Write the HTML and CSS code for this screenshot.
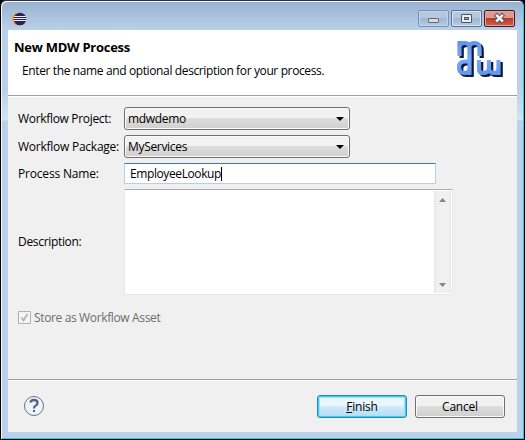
FILE: index.html
```html
<!DOCTYPE html>
<html lang="en">
<head>
<meta charset="utf-8">
<title>New MDW Process</title>
<link rel="stylesheet" href="styles.css">
</head>
<body>
<div class="window">
  <div class="titlebar">
    <svg class="eclipse" width="15" height="14" viewBox="0 0 15 14"><circle cx="6.500" cy="7" r="6.300" fill="#f7941e"/><circle cx="8" cy="7" r="6.300" fill="#2c2255"/><path d="M2 4.500h12M1.500 6.500h13M2 8.500h12" stroke="#e8e8f2" stroke-width="1"/></svg>
    <div class="controls">
      <span class="control"><svg width="28" height="15" viewBox="0 0 28 15"><rect x="9.500" y="7.500" width="10" height="4" rx=".5" fill="#dedbd5" stroke="#626b78"/></svg></span>
      <span class="control max"><svg width="28" height="15" viewBox="0 0 28 15"><rect x="9.500" y="3.500" width="10" height="8" rx=".5" fill="#eee" stroke="#4b5265"/><rect x="12.500" y="6.500" width="4" height="2" fill="#91add6" stroke="#4b5265"/></svg></span>
      <span class="control close"><svg width="28" height="15" viewBox="0 0 28 15"><path d="M12 4.700l5 5M17 4.700l-5 5" stroke="#555566" stroke-width="4.400" stroke-linecap="square"/><path d="M12 4.700l5 5M17 4.700l-5 5" stroke="#f5f3f3" stroke-width="2.500" stroke-linecap="square"/></svg></span>
    </div>
  </div>
  <main class="client">
    <header class="header">
      <div><h1 class="title">New MDW Process</h1>
      <p class="subtitle">Enter the name and optional description for your process.</p></div>
      <svg class="logo" width="52" height="44" viewBox="0 0 52 44" fill="none" stroke-width="4.200">
        <defs>
          <linearGradient id="blue" gradientUnits="userSpaceOnUse" x1="0" y1="4" x2="0" y2="39"><stop stop-color="#5f92ea"/><stop offset=".5" stop-color="#7ba9fb"/><stop offset="1" stop-color="#5f94ee"/></linearGradient>
          <g id="mark"><path d="M3.500 4V19M3.500 9Q4.500 6 8.500 6Q13.500 6 13.500 11V38M13.500 9Q14.500 6 18.500 6Q23.500 6 23.500 11V19M13.500 24.500H9Q3 24.500 3 30Q3 36 8 36Q12 36 13.500 33M23 23V32Q23 36 27 36Q33 36 33 31V23M33 31Q33 36 38 36Q41.500 36 42.500 33M42.500 23V38"/></g>
        </defs>
        <use class="shade" href="#mark" x="2.200" y="2" stroke="#0d1a33"/><use href="#mark" stroke="url(#blue)"/>
      </svg>
    </header>
    <form class="form">
      <div class="row combo-row"><label class="label">Workflow Project:</label><div class="combo"><span>mdwdemo</span><i class="arrow"></i></div></div>
      <div class="row combo-row second"><label class="label package">Workflow Package:</label><div class="combo"><span>MyServices</span><i class="arrow"></i></div></div>
      <div class="row name-row"><label class="label process">Process Name:</label><div class="field"><span>EmployeeLookup</span><i class="caret"></i></div></div>
      <div class="row area-row"><label class="label">Description:</label><div class="area"><div class="scroll"><svg width="17" height="102" viewBox="0 0 17 102"><path d="M8.500 7L12 11H5zM5 92h7l-3.500 4z" fill="#858585"/></svg></div></div></div>
      <div class="check"><svg width="13" height="13" viewBox="0 0 13 13"><rect x=".5" y=".5" width="12" height="12" fill="#f5f5f5" stroke="#b1b1b1"/><path d="M3.500 6.500l2 3L9.500 3" fill="none" stroke="#b5b5b5" stroke-width="1.800"/></svg><span>Store as Workflow Asset</span></div>
    </form>
    <footer class="footer">
      <svg class="help" width="22" height="22" viewBox="0 0 22 22"><circle cx="11" cy="11" r="9.500" fill="#f2f3f4" stroke="#60718f"/><path d="M7.300 7.500Q8 5 11 5Q14.500 5 14.500 8Q14.500 10 12.500 10.800Q11 11.500 11 13.500" fill="none" stroke="#506489" stroke-width="2.300"/><rect x="10" y="15" width="2" height="2" fill="#506489"/></svg>
      <div class="buttons"><button type="button" class="button primary"><u>F</u>inish</button><button type="button" class="button">Cancel</button></div>
    </footer>
  </main>
</div>
</body>
</html>
```
FILE: styles.css
```css
* { box-sizing: border-box; }
body { margin: 0; background: #000; font: 12px/16px "Open Sans", "Noto Sans", sans-serif; letter-spacing: -0.32px; color: #000; }
.window { width: 525px; height: 440px; border: 1px solid #000; border-top-color: #302e38; border-radius: 6px 6px 0 0; padding: 0 7px 7px; background: linear-gradient(#98b1d0 0, #b9d1ea 29px, #b9d1ea 89px, #d6e3f2 119px, #b9d1ea 120px); box-shadow: inset 1px 1px #f4f8fc, inset -1px -1px #24cce0; }
.titlebar { height: 29px; display: flex; justify-content: space-between; padding: 9px 2px 0 4px; }
.eclipse { margin-top: 2px; }
.controls { display: flex; gap: 2px; }
.control { width: 31px; height: 17px; border: 1px solid #7893b1; border-radius: 2px; box-shadow: inset 0 0 0 1px #c2d4e8; background: linear-gradient(#b4c8df 48%, #9eb7d4 50%, #b5cce5); }
.control svg { display: block; }
.control.max { border-color: #59708f; box-shadow: inset 0 0 0 1px #d7e4f1; }
.control.close { border-color: #4b1520; box-shadow: inset 0 0 0 1px #e6a39a; background: linear-gradient(#dd9b8f 45%, #bd3927 50%, #cf6244); }
.client { height: 402px; width: 509px; background: #f0f0f0; display: flex; flex-direction: column; }
.header { height: 66px; background: #fff; border-bottom: 1px solid #a0a0a0; display: flex; justify-content: space-between; }
.title { margin: 9px 0 0 6px; font-size: 13px; line-height: 17px; font-weight: 700; letter-spacing: -0.27px; white-space: nowrap; }
.subtitle { margin: 6px 0 0 14px; line-height: 17px; letter-spacing: -0.375px; white-space: nowrap; }
.logo { margin: 7px 9px 0 0; }
.shade { filter: blur(0.7px); }
.form { border-top: 1px solid #fff; height: 283px; padding: 10px 0 0 10px; }
.row { display: flex; align-items: center; }
.label { width: 106px; white-space: nowrap; }
.package { letter-spacing: -0.25px; }
.process { letter-spacing: -0.18px; }
.combo-row { height: 23px; }
.second { margin-top: 5px; }
.combo { width: 226px; height: 23px; border: 1px solid #707070; border-radius: 3px; box-shadow: inset 0 0 0 1px #fafafa; background: linear-gradient(#f2f2f2 48%, #dddddd 50%, #cfcfcf); padding: 0 5px 0 3px; display: flex; align-items: center; justify-content: space-between; }
.arrow { border: 4px solid transparent; border-top-color: #000; border-bottom: 0; }
.name-row { height: 21px; margin-top: 5px; }
.field { width: 312px; height: 21px; border: 1px solid #b5cfe7; border-top-color: #3d7bad; border-radius: 1px; background: #fff; padding-left: 5px; display: flex; align-items: center; letter-spacing: -0.4px; }
.caret { width: 1px; height: 14px; background: #000; }
.area-row { height: 106px; margin-top: 5px; }
.area { width: 329px; height: 106px; background: #fff; border: 1px solid #e3e9ef; border-top-color: #abadb3; display: flex; justify-content: flex-end; padding: 1px; }
.scroll { width: 17px; height: 102px; background: linear-gradient(90deg, #e5e5e5, #f0f0f0 3px, #f0f0f0 15px, #e6e6e6); }
.scroll svg { display: block; }
.check { display: flex; align-items: center; gap: 3px; color: #6d6d6d; margin-top: 14px; height: 17px; letter-spacing: -0.36px; }
.footer { border-top: 1px solid #a0a0a0; box-shadow: inset 0 1px #fff; height: 53px; display: flex; justify-content: space-between; padding: 15px 12px 0 15px; }
.buttons { display: flex; gap: 8px; }
.button { width: 90px; height: 23px; padding: 0; border: 1px solid #707070; border-radius: 3px; box-shadow: inset 0 0 0 1px #fafafa; background: linear-gradient(#f2f2f2 48%, #dddddd 50%, #cfcfcf); font: inherit; letter-spacing: -0.2px; }
.primary { border-color: #3c7fb1; box-shadow: inset 0 0 0 1px #35d0fa, inset 0 0 0 2px #9ae7fc; background: linear-gradient(#eaf6fd 48%, #d0eaf8 50%, #b8ddf0); }
```
